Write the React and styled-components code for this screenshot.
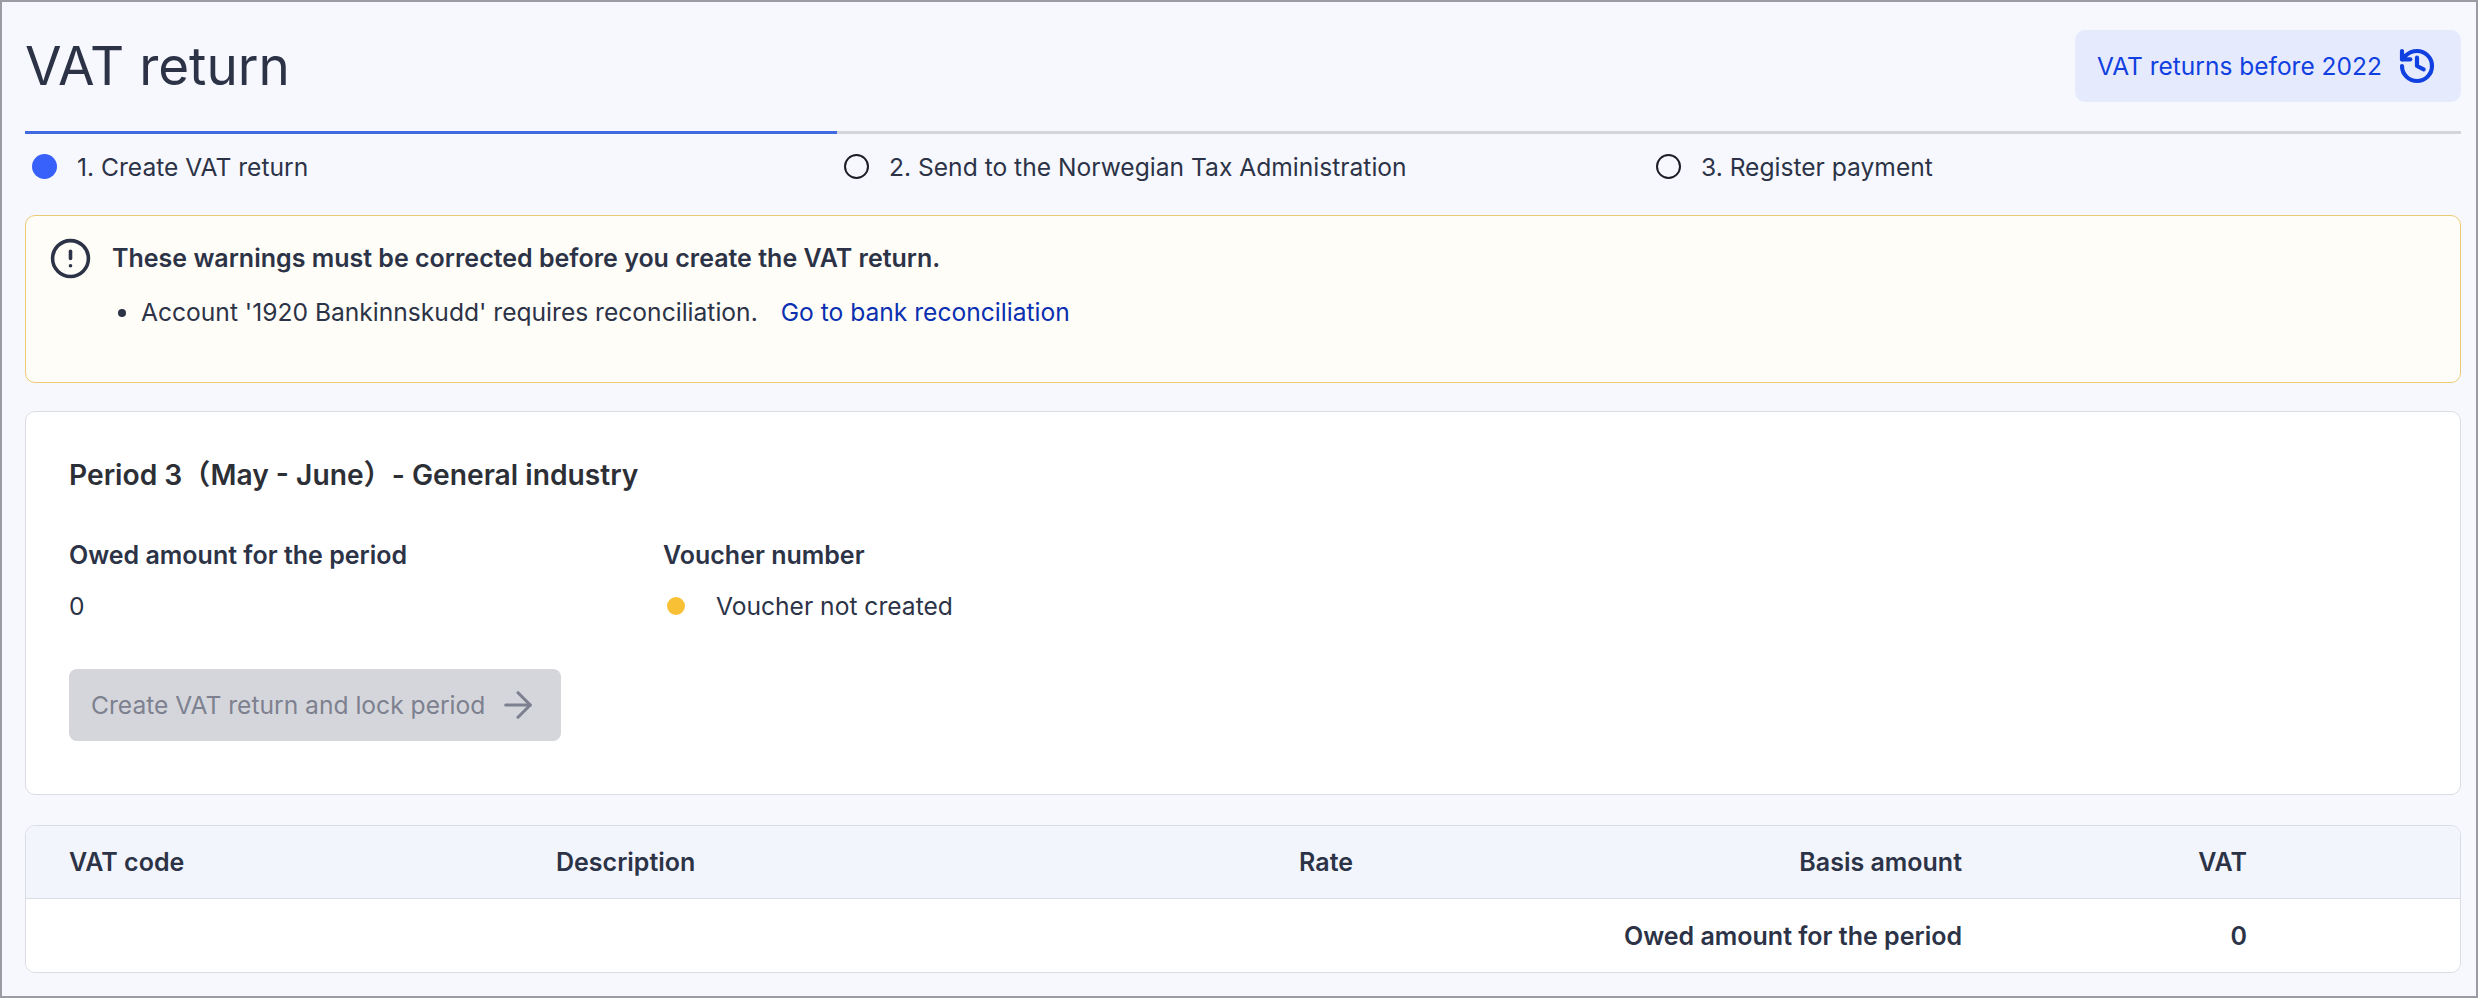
import React from 'react';
import styled, {createGlobalStyle} from 'styled-components';
import {History, CircleAlert, ArrowRight} from 'lucide-react';

const Global = createGlobalStyle`
  html, body { margin: 0; padding: 0; }
  body { font-family: Inter, "Noto Sans CJK SC", sans-serif; color: #2c3347; }
  * { box-sizing: border-box; }
`

const Page = styled.div`
  width: 2478px;
  height: 998px;
  overflow: hidden;
  background: #f7f8fe;
  border: 2px solid #9b9ca3;
  padding: 28px 15px 0 23px;
`
const Header = styled.div`
  display: flex;
  justify-content: space-between;
  align-items: center;
  height: 72px;
`
const Title = styled.h1`
  margin: 0;
  font-size: 53px;
  font-weight: 400;
  color: #2c3347;
`
const HistoryButton = styled.button`
  display: flex;
  align-items: center;
  justify-content: space-between;
  width: 386px;
  height: 72px;
  padding: 0 24px 0 22px;
  border: none;
  border-radius: 10px;
  background: #e5eafd;
  color: #1140e0;
  font: 400 24.5px Inter, sans-serif;
`
const Steps = styled.div`
  display: grid;
  grid-template-columns: repeat(3, 1fr);
  margin-top: 29px;
`
const Step = styled.div`
  border-top: 3px solid ${p => (p.$active ? '#4169e1' : '#d4d5db')};
  display: flex;
  align-items: center;
  gap: 20px;
  height: 68px;
  padding-left: 7px;
  font-size: 24.6px;
`
const Dot = styled.span`
  width: 25px;
  height: 25px;
  border-radius: 50%;
  background: ${p => (p.$active ? '#3860fa' : 'transparent')};
  border: ${p => (p.$active ? 'none' : '2px solid #1c1e26')};
`
const Warning = styled.div`
  height: 168px;
  margin-top: 16px;
  padding: 24px 23px;
  display: flex;
  gap: 20px;
  background: #fffdf7;
  border: 1.5px solid #eacb73;
  border-radius: 10px;
  svg { flex: none; margin-top: -3px; }
`
const WarningTitle = styled.div`
  font-size: 25px;
  font-weight: 600;
  line-height: 36px;
`
const WarningList = styled.ul`
  margin: 18px 0 0;
  padding: 0 0 0 29px;
  font-size: 24.6px;
  line-height: 36px;
`
const BankLink = styled.a`
  margin-left: 23px;
  color: #0a2fb0;
`
const Card = styled.div`
  height: 384px;
  margin-top: 28px;
  padding: 43px 43px;
  background: #fff;
  border: 1.5px solid #dcdde3;
  border-radius: 10px;
`
const CardTitle = styled.h2`
  margin: 0;
  font-size: 28.2px;
  font-weight: 600;
  line-height: 40px;
  color: #2d2f36;
`
const Fields = styled.div`
  display: grid;
  grid-template-columns: 594px 1fr;
  margin-top: 42px;
`
const Label = styled.div`
  font-size: 25px;
  font-weight: 600;
  line-height: 36px;
`
const Value = styled.div`
  display: flex;
  align-items: center;
  gap: 31px;
  margin-top: 15px;
  font-size: 24.6px;
  line-height: 36px;
`
const StatusDot = styled.span`
  width: 18px;
  height: 18px;
  margin-left: 4px;
  border-radius: 50%;
  background: #f8c135;
`
const CreateButton = styled.button`
  display: flex;
  align-items: center;
  gap: 12px;
  width: 492px;
  height: 72px;
  margin-top: 45px;
  padding: 0 0 0 22px;
  border: none;
  border-radius: 8px;
  background: #d5d6dc;
  color: #7d818f;
  font: 400 24.6px Inter, sans-serif;
  white-space: nowrap;
  svg { flex: none; }
`
const Table = styled.div`
  height: 148px;
  margin-top: 30px;
  background: #fff;
  border: 1.5px solid #dcdde3;
  border-radius: 10px;
  overflow: hidden;
`
const Row = styled.div`
  display: grid;
  grid-template-columns: 487px 1fr 370px 609px 285px 213px;
  align-items: center;
  height: 73px;
  padding-left: 43px;
  font-size: 25px;
  font-weight: 600;
  background: ${p => (p.$head ? '#f3f5fd' : '#fff')};
  border-bottom: ${p => (p.$head ? '1.5px solid #dcdde3' : 'none')};
`
const Right = styled.div`
  text-align: right;
  white-space: nowrap;
`

export default function App() {
  return (
    <Page>
      <Global/>
      <Header>
        <Title>VAT return</Title>
        <HistoryButton>
          VAT returns before 2022
          <History size={40} strokeWidth={2.5}/>
        </HistoryButton>
      </Header>
      <Steps>
        <Step $active><Dot $active/>1. Create VAT return</Step>
        <Step><Dot/>2. Send to the Norwegian Tax Administration</Step>
        <Step><Dot/>3. Register payment</Step>
      </Steps>
      <Warning>
        <CircleAlert size={43} strokeWidth={2}/>
        <div>
          <WarningTitle>These warnings must be corrected before you create the VAT return.</WarningTitle>
          <WarningList>
            <li>Account '1920 Bankinnskudd' requires reconciliation.<BankLink>Go to bank reconciliation</BankLink></li>
          </WarningList>
        </div>
      </Warning>
      <Card>
        <CardTitle>Period 3（May - June）- General industry</CardTitle>
        <Fields>
          <div>
            <Label>Owed amount for the period</Label>
            <Value>0</Value>
          </div>
          <div>
            <Label>Voucher number</Label>
            <Value><StatusDot/>Voucher not created</Value>
          </div>
        </Fields>
        <CreateButton>
          Create VAT return and lock period
          <ArrowRight size={42} strokeWidth={1.8}/>
        </CreateButton>
      </Card>
      <Table>
        <Row $head>
          <div>VAT code</div>
          <div>Description</div>
          <Right>Rate</Right>
          <Right>Basis amount</Right>
          <Right>VAT</Right>
        </Row>
        <Row>
          <div/>
          <div/>
          <div/>
          <Right>Owed amount for the period</Right>
          <Right>0</Right>
        </Row>
      </Table>
    </Page>
  );
}
